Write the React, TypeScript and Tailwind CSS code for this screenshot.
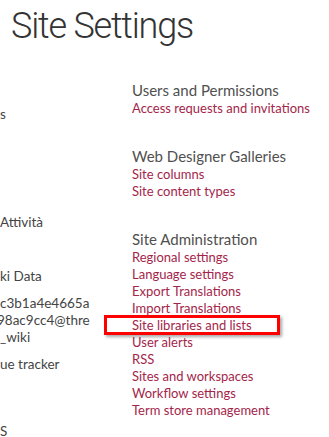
export default function App() {
    const sections = [
        { title: "Users and Permissions", links: ["Access requests and invitations"] },
        { title: "Web Designer Galleries", links: ["Site columns", "Site content types"] },
        {
            title: "Site Administration",
            links: [
                "Regional settings",
                "Language settings",
                "Export Translations",
                "Import Translations",
                "Site libraries and lists",
                "User alerts",
                "RSS",
                "Sites and workspaces",
                "Workflow settings",
                "Term store management",
            ],
        },
    ]

    return (
        <div className="relative w-[329px] h-[437px] overflow-hidden bg-white font-['Lato',sans-serif]">
            <h1 className="pl-[11px] pt-[4px] font-['Roboto',sans-serif] text-[36px] leading-[44px] font-light tracking-[-1.2px] text-[#333] whitespace-nowrap">Site Settings</h1>

            <div className="flex">
                {/* left quick launch, cut off by the window edge */}
                <div className="w-[132px] shrink-0 text-[13.5px] leading-[17px] text-[#444] whitespace-nowrap">
                    <div className="mt-[58px]">s</div>
                    <div className="mt-[91px]">Attività</div>
                    <div className="mt-[37px]">ki Data</div>
                    <div className="mt-[10px]">
                        <div>c3b1a4e4665a</div>
                        <div className="-ml-[3px]">98ac9cc4@thre</div>
                        <div>_wiki</div>
                    </div>
                    <div className="mt-[10px]">ue tracker</div>
                    <div className="mt-[50px]">S</div>
                </div>

                <div className="pt-[33px] flex flex-col gap-[30px]">
                    {sections.map((s) => (
                        <div key={s.title}>
                            <h3 className="text-[15px] leading-[19px] text-[#505050] whitespace-nowrap">{s.title}</h3>
                            <ul>
                                {s.links.map((l) => (
                                    <li key={l} className="relative text-[13px] leading-[17px] text-[#a3264a] whitespace-nowrap">
                                        {l}
                                        {l === "Site libraries and lists" && (
                                            <span className="absolute -left-[28px] -top-[2px] w-[176px] h-[20px] border-[3px] border-[#ff0000] shadow-[2px_2px_3px_rgba(0,0,0,0.35)]" />
                                        )}
                                    </li>
                                ))}
                            </ul>
                        </div>
                    ))}
                </div>
            </div>
        </div>
    )
}
